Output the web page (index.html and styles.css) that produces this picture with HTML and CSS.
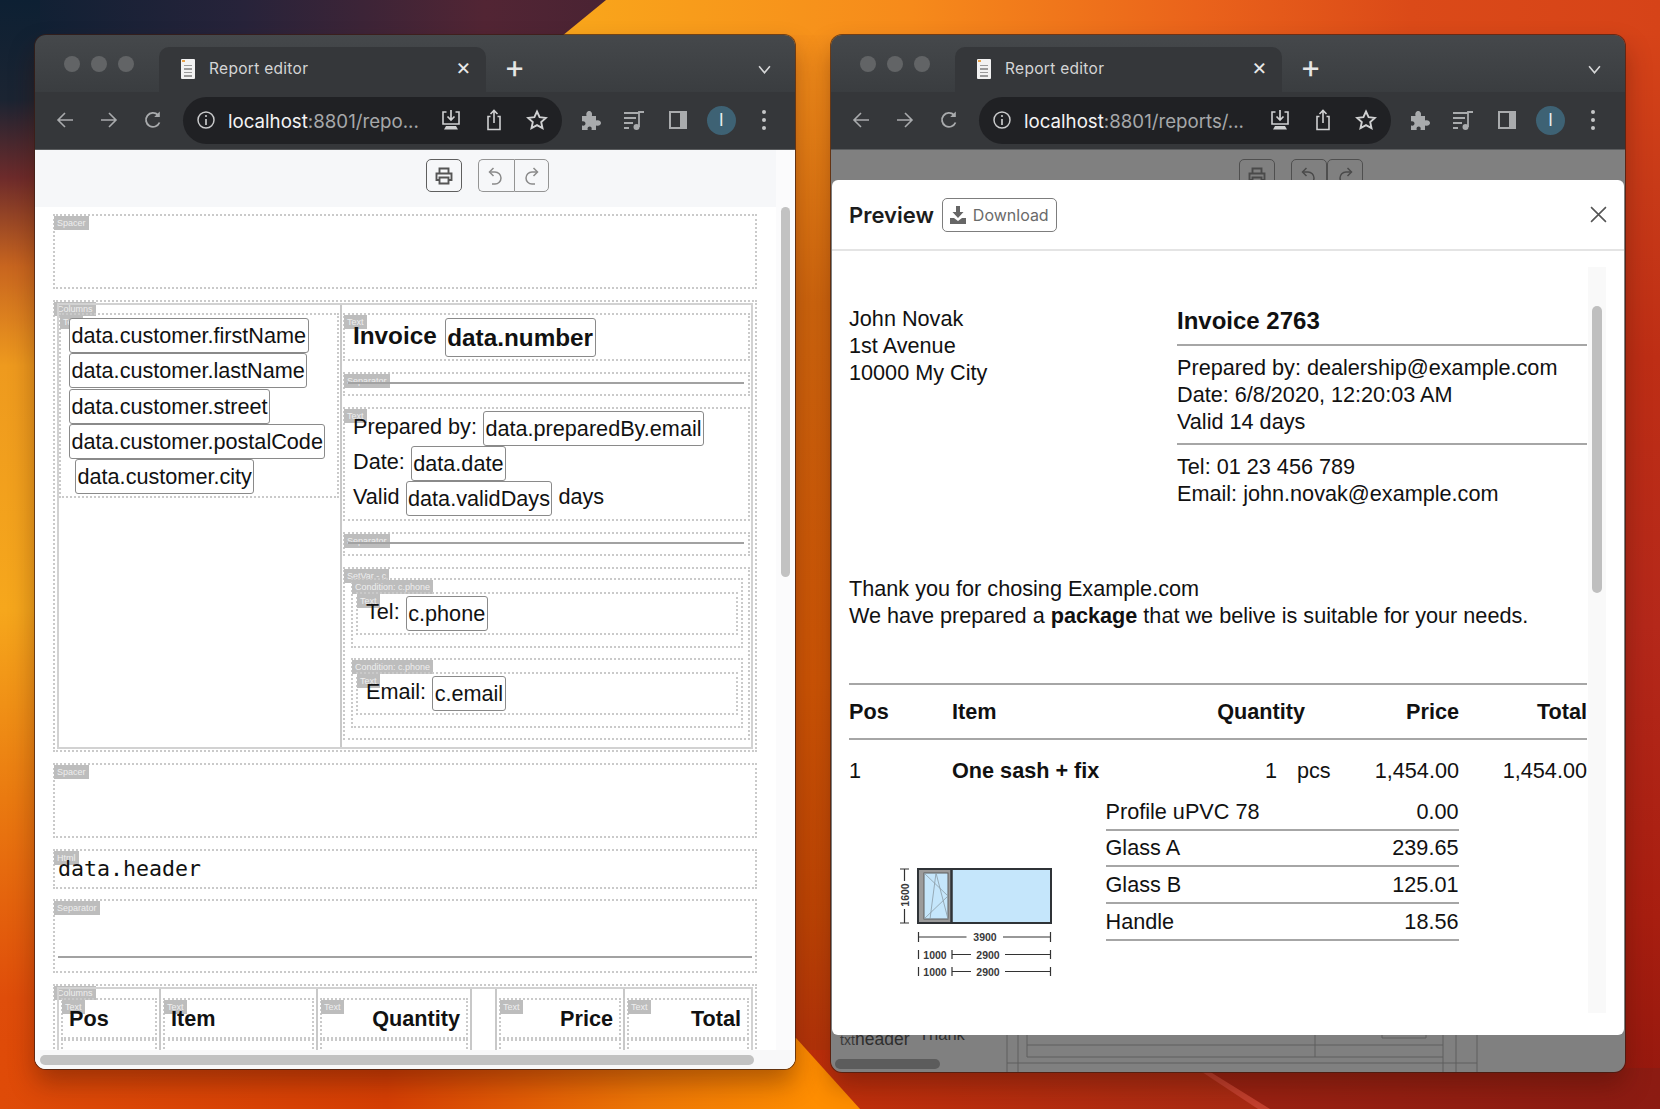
FILE: index.html
```html
<!DOCTYPE html>
<html lang="en">
<head>
  <meta charset="UTF-8">
  <meta name="viewport" content="width=device-width, initial-scale=1.0">
  <title>Report editor</title>
  <link rel="stylesheet" href="styles.css">
</head>
<body>
  <!-- Desktop wallpaper -->
  <svg class="wallpaper" viewBox="0 0 1660 1109" aria-hidden="true">
    <defs>
      <linearGradient id="wpBase" x1="0" x2="1" y1="0" y2="0">
        <stop offset="0.35" stop-color="#f9a51b"/>
        <stop offset="0.55" stop-color="#f68a1b"/>
        <stop offset="0.72" stop-color="#ea631b"/>
        <stop offset="0.85" stop-color="#db4a18"/>
        <stop offset="1" stop-color="#d64318"/>
      </linearGradient>
      <linearGradient id="wpMiddle" x1="0" x2="0" y1="0" y2="1">
        <stop offset="0" stop-color="#f5901b"/>
        <stop offset="0.25" stop-color="#d0660e"/>
        <stop offset="0.6" stop-color="#cf5606"/>
        <stop offset="0.82" stop-color="#bf4505"/>
        <stop offset="0.94" stop-color="#b5340a"/>
      </linearGradient>
      <linearGradient id="wpRight" x1="0" x2="0" y1="0" y2="1">
        <stop offset="0" stop-color="#d64318"/>
        <stop offset="0.14" stop-color="#c83a18"/>
        <stop offset="0.3" stop-color="#be2e15"/>
        <stop offset="0.55" stop-color="#b5281a"/>
        <stop offset="0.82" stop-color="#a81e10"/>
        <stop offset="1" stop-color="#94180e"/>
      </linearGradient>
      <linearGradient id="wpLeft" x1="0" x2="0" y1="0" y2="1">
        <stop offset="0" stop-color="#0d2033"/>
        <stop offset="0.09" stop-color="#1b2432"/>
        <stop offset="0.16" stop-color="#6d2b2b"/>
        <stop offset="0.24" stop-color="#c8651f"/>
        <stop offset="0.33" stop-color="#ee9a1e"/>
        <stop offset="0.55" stop-color="#f6a71c"/>
        <stop offset="0.72" stop-color="#ea7a10"/>
        <stop offset="0.9" stop-color="#df4d0a"/>
        <stop offset="1" stop-color="#dd4808"/>
      </linearGradient>
      <linearGradient id="wpTop" x1="0" x2="1" y1="0" y2="0">
        <stop offset="0" stop-color="#0d2033"/>
        <stop offset="0.4" stop-color="#27233a"/>
        <stop offset="0.8" stop-color="#522534"/>
        <stop offset="1" stop-color="#4a2333"/>
      </linearGradient>
      <linearGradient id="wpBottom" x1="0" x2="1" y1="0" y2="0">
        <stop offset="0" stop-color="#df4b08"/>
        <stop offset="0.45" stop-color="#d63f04"/>
        <stop offset="0.75" stop-color="#ee7706"/>
        <stop offset="0.95" stop-color="#ff8e00"/>
      </linearGradient>
      <linearGradient id="wpFloor" x1="0" x2="1" y1="0" y2="0">
        <stop offset="0" stop-color="#c4300a"/>
        <stop offset="1" stop-color="#a82a14"/>
      </linearGradient>
      <linearGradient id="wpCorner" x1="0" x2="1" y1="0" y2="0">
        <stop offset="0" stop-color="#9c2212"/>
        <stop offset="1" stop-color="#8c1b12"/>
      </linearGradient>
    </defs>
    <rect width="1660" height="1109" fill="url(#wpBase)"/>
    <rect x="780" y="35" width="70" height="1074" fill="url(#wpMiddle)"/>
    <rect x="1600" y="35" width="60" height="1074" fill="url(#wpRight)"/>
    <rect x="780" y="1050" width="500" height="59" fill="url(#wpFloor)"/>
    <polygon points="0,0 606,0 540,54 0,54" fill="url(#wpTop)"/>
    <rect width="40" height="1109" fill="url(#wpLeft)"/>
    <polygon points="0,1040 796,1038 860,1109 0,1109" fill="url(#wpBottom)"/>
    <polygon points="1196,1068 1660,1068 1660,1109 1264,1109" fill="url(#wpCorner)"/>
    <polygon points="1196,1068 1204,1068 1270,1109 1258,1109" fill="#c4402e"/>
  </svg>

  <!-- Shared chrome icons -->
  <svg class="sprite" aria-hidden="true">
    <symbol id="iBack" viewBox="0 0 20 20"><path d="M18 10H3M10 3l-7 7 7 7" fill="none" stroke="currentColor" stroke-width="1.6"/></symbol>
    <symbol id="iForward" viewBox="0 0 20 20"><path d="M2 10h15M10 3l7 7-7 7" fill="none" stroke="currentColor" stroke-width="1.6"/></symbol>
    <symbol id="iReload" viewBox="0 0 20 20"><path d="M16.5 12.5A7 7 0 1 1 15 5" fill="none" stroke="currentColor" stroke-width="1.8"/><path d="M16.8 1.5v5.6h-5.6z" fill="currentColor"/></symbol>
    <symbol id="iInfo" viewBox="0 0 20 20"><circle cx="10" cy="10" r="8" fill="none" stroke="currentColor" stroke-width="1.5"/><path d="M10 9v6" stroke="currentColor" stroke-width="1.7"/><circle cx="10" cy="6" r="1.1" fill="currentColor"/></symbol>
    <symbol id="iInstall" viewBox="0 0 22 22"><path d="M6.5 3H3v12h16V3h-3.500" fill="none" stroke="currentColor" stroke-width="1.6"/><path d="M11 1v10M7.500 7.500 11 11l3.500-3.500" fill="none" stroke="currentColor" stroke-width="1.7"/><path d="M6 17h10l2 3.500H4z" fill="currentColor"/></symbol>
    <symbol id="iShare" viewBox="0 0 22 22"><path d="M7.500 7.500H5v13h12v-13h-2.500" fill="none" stroke="currentColor" stroke-width="1.6"/><path d="M11 14V2M7.500 5 11 1.500 14.500 5" fill="none" stroke="currentColor" stroke-width="1.6"/></symbol>
    <symbol id="iStar" viewBox="0 0 22 22"><path d="m11 2.500 2.600 5.700 6.200.7-4.600 4.200 1.300 6.100L11 16.100l-5.500 3.100 1.300-6.100-4.600-4.200 6.200-.7z" fill="none" stroke="currentColor" stroke-width="1.9"/></symbol>
    <symbol id="iPuzzle" viewBox="0 0 22 22"><path d="M3 7h4.500c-.8-3.500 1-5 2.700-5s3.500 1.500 2.700 5H17v4.500c3.500-.8 5 1 5 2.500s-1.500 3.300-5 2.500V21h-4.500c.8-2.500-.5-3.500-1.800-3.500S8 18.500 8.700 21H3v-4.500c2.500.6 3.500-.8 3.500-2S5.500 11.700 3 12.300z" fill="currentColor"/></symbol>
    <symbol id="iQueue" viewBox="0 0 22 22"><path d="M1 4h15M1 9h12M1 14h9M1 19h5" fill="none" stroke="currentColor" stroke-width="1.800"/><path d="M16 18V3h5" fill="none" stroke="currentColor" stroke-width="1.800"/><circle cx="13.500" cy="18" r="3" fill="currentColor"/></symbol>
    <symbol id="iPanel" viewBox="0 0 22 22"><path d="M2 2h18v18H2z" fill="currentColor"/><path d="M4 4h9v14H4z" fill="#35373a"/></symbol>
    <symbol id="iMenu" viewBox="0 0 6 22"><circle cx="3" cy="3" r="2" fill="currentColor"/><circle cx="3" cy="11" r="2" fill="currentColor"/><circle cx="3" cy="19" r="2" fill="currentColor"/></symbol>
    <symbol id="iPage" viewBox="0 0 14 20"><path d="M0 1q0-1 1-1h12q1 0 1 1v18q0 1-1 1H1q-1 0-1-1z" fill="#f2f2f2"/><path d="M1 1h3v2H1z" fill="#e8a24a"/><path d="M3 6h8v1H3zM3 9h8v2H3zM3 13h8v1H3zM3 16h8v2H3z" fill="#9a9a9a"/></symbol>
    <symbol id="iPrint" viewBox="0 0 20 20"><path d="M5.500 7V2.500h9V7M5.500 14H2.500V7.500h15V14h-3" fill="none" stroke="currentColor" stroke-width="1.900"/><path d="M5.500 11.500h9v6h-9z" fill="none" stroke="currentColor" stroke-width="1.900"/></symbol>
    <symbol id="iUndo" viewBox="0 0 20 20"><path d="M6 18h3a6 6 0 0 0 0-12H4" fill="none" stroke="currentColor" stroke-width="1.500"/><path d="M7.500 2 3.500 6l4 4" fill="none" stroke="currentColor" stroke-width="1.500"/></symbol>
    <symbol id="iRedo" viewBox="0 0 20 20"><path d="M14 18h-3a6 6 0 0 1 0-12h5" fill="none" stroke="currentColor" stroke-width="1.500"/><path d="m12.500 2 4 4-4 4" fill="none" stroke="currentColor" stroke-width="1.500"/></symbol>
  </svg>

  <div class="desktop">

    <!-- Editor window -->
    <div class="window window-editor">
      <div class="tabstrip">
        <div class="lights"><span></span><span></span><span></span></div>
        <div class="tab">
          <svg class="favicon"><use href="#iPage"/></svg>
          <span class="tab-title">Report editor</span>
          <span class="tab-close">×</span>
        </div>
        <span class="tab-new">+</span>
        <svg class="tab-list" viewBox="0 0 12 8"><path d="M1 1l5 6 5-6" fill="none" stroke="currentColor" stroke-width="1.500"/></svg>
      </div>
      <div class="toolbar">
        <div class="nav">
          <svg class="ico"><use href="#iBack"/></svg>
          <svg class="ico"><use href="#iForward"/></svg>
          <svg class="ico"><use href="#iReload"/></svg>
        </div>
        <div class="omnibox">
          <svg class="ico-info"><use href="#iInfo"/></svg>
          <span class="url"><b>localhost</b>:8801/repo...</span>
          <svg class="ico-box"><use href="#iInstall"/></svg>
          <svg class="ico-box"><use href="#iShare"/></svg>
          <svg class="ico-box"><use href="#iStar"/></svg>
        </div>
        <div class="actions">
          <svg class="ico-act"><use href="#iPuzzle"/></svg>
          <svg class="ico-act"><use href="#iQueue"/></svg>
          <svg class="ico-act"><use href="#iPanel"/></svg>
          <span class="avatar">I</span>
          <svg class="ico-menu"><use href="#iMenu"/></svg>
        </div>
      </div>

      <div class="editor">
        <div class="editor-main">
          <div class="editor-bar">
            <button class="btn btn-print"><svg><use href="#iPrint"/></svg></button>
            <div class="btn-group">
              <button class="btn"><svg><use href="#iUndo"/></svg></button>
              <button class="btn"><svg><use href="#iRedo"/></svg></button>
            </div>
          </div>
          <div class="report">
            <div class="box spacer"><span class="tag">Spacer</span></div>

            <div class="box columns">
              <span class="tag">Columns</span>
              <div class="frame">
                <div class="col col-left">
                  <div class="box text-customer">
                    <span class="tag">Text</span>
                    <span class="field">data.customer.firstName</span>
                    <span class="field">data.customer.lastName</span>
                    <span class="field">data.customer.street</span>
                    <span class="field">data.customer.postalCode</span>
                    <span class="field field-city">data.customer.city</span>
                  </div>
                </div>
                <div class="col col-right">
                  <div class="box text-title">
                    <span class="tag">Text</span>
                    <strong>Invoice</strong>
                    <span class="field field-bold">data.number</span>
                  </div>
                  <div class="box sep-small"><span class="tag">Separator</span><hr></div>
                  <div class="box text-meta">
                    <span class="tag">Text</span>
                    <div class="line">Prepared by: <span class="field">data.preparedBy.email</span></div>
                    <div class="line">Date: <span class="field">data.date</span></div>
                    <div class="line">Valid <span class="field">data.validDays</span> days</div>
                  </div>
                  <div class="box sep-small"><span class="tag">Separator</span><hr></div>
                  <div class="box setvar">
                    <span class="tag">SetVar - c</span>
                    <div class="box condition">
                      <span class="tag">Condition: c.phone</span>
                      <div class="box text-contact">
                        <span class="tag">Text</span>
                        <div class="line line-wide">Tel: <span class="field">c.phone</span></div>
                      </div>
                    </div>
                    <div class="box condition">
                      <span class="tag">Condition: c.phone</span>
                      <div class="box text-contact">
                        <span class="tag">Text</span>
                        <div class="line line-wide">Email: <span class="field">c.email</span></div>
                      </div>
                    </div>
                  </div>
                </div>
              </div>
            </div>

            <div class="box spacer"><span class="tag">Spacer</span></div>
            <div class="box html-block"><span class="tag">Html</span>data.header</div>
            <div class="box sep-large"><span class="tag">Separator</span><hr></div>

            <div class="box columns columns-head">
              <span class="tag">Columns</span>
              <div class="frame frame-head">
                <div class="head-col"><div class="box head-cell"><span class="tag">Text</span>Pos</div><div class="box head-next"></div></div>
                <div class="head-col"><div class="box head-cell"><span class="tag">Text</span>Item</div><div class="box head-next"></div></div>
                <div class="head-col"><div class="box head-cell head-right"><span class="tag">Text</span>Quantity</div><div class="box head-next"></div></div>
                <div class="head-col"></div>
                <div class="head-col"><div class="box head-cell head-right"><span class="tag">Text</span>Price</div><div class="box head-next"></div></div>
                <div class="head-col"><div class="box head-cell head-right"><span class="tag">Text</span>Total</div><div class="box head-next"></div></div>
              </div>
            </div>
          </div>
        </div>
        <div class="vscroll"><div class="vscroll-thumb"></div></div>
        <div class="hscroll"><div class="hscroll-thumb"></div></div>
      </div>
    </div>

    <!-- Preview window -->
    <div class="window window-preview">
      <div class="tabstrip">
        <div class="lights"><span></span><span></span><span></span></div>
        <div class="tab">
          <svg class="favicon"><use href="#iPage"/></svg>
          <span class="tab-title">Report editor</span>
          <span class="tab-close">×</span>
        </div>
        <span class="tab-new">+</span>
        <svg class="tab-list" viewBox="0 0 12 8"><path d="M1 1l5 6 5-6" fill="none" stroke="currentColor" stroke-width="1.500"/></svg>
      </div>
      <div class="toolbar">
        <div class="nav">
          <svg class="ico"><use href="#iBack"/></svg>
          <svg class="ico"><use href="#iForward"/></svg>
          <svg class="ico"><use href="#iReload"/></svg>
        </div>
        <div class="omnibox">
          <svg class="ico-info"><use href="#iInfo"/></svg>
          <span class="url"><b>localhost</b>:8801/reports/...</span>
          <svg class="ico-box"><use href="#iInstall"/></svg>
          <svg class="ico-box"><use href="#iShare"/></svg>
          <svg class="ico-box"><use href="#iStar"/></svg>
        </div>
        <div class="actions">
          <svg class="ico-act"><use href="#iPuzzle"/></svg>
          <svg class="ico-act"><use href="#iQueue"/></svg>
          <svg class="ico-act"><use href="#iPanel"/></svg>
          <span class="avatar">I</span>
          <svg class="ico-menu"><use href="#iMenu"/></svg>
        </div>
      </div>

      <div class="backdrop">
        <div class="backdrop-bar">
          <span class="dim-btn"><svg><use href="#iPrint"/></svg></span>
          <span class="dim-group">
            <span class="dim-btn"><svg><use href="#iUndo"/></svg></span>
            <span class="dim-btn"><svg><use href="#iRedo"/></svg></span>
          </span>
        </div>
        <!-- dimmed editor peeking out under the dialog -->
        <svg class="backdrop-under" viewBox="0 0 794 37">
          <text x="9" y="10" class="dim-small">txt</text>
          <text x="24" y="10" class="dim-text">header</text>
          <text x="88" y="5" class="dim-thank">Thank</text>
          <path d="M176 0v37M187 0v37M612 0v37M625 0v37M646 0v37" class="dim-line"/>
          <path d="M196 0v22M196 10H484V0M484 10H612M196 22H612M176 28H646M484 10v12M551 0v3h44V0" class="dim-line"/>
          <rect x="4" y="24" width="105" height="10" rx="5" fill="#5c5c5c"/>
        </svg>

        <div class="modal">
          <div class="modal-head">
            <span class="modal-title">Preview</span>
            <button class="btn-download">
              <svg viewBox="0 0 16 18"><path d="M6 0h4v6h3.500L8 12 2.500 6H6z" fill="currentColor"/><path d="M0 12h4l4 3 4-3h4v6H0z" fill="currentColor"/></svg>
              Download
            </button>
            <svg class="modal-close" viewBox="0 0 16 16"><path d="M1 1l14 14M15 1 1 15" fill="none" stroke="currentColor" stroke-width="1.500"/></svg>
          </div>
          <div class="modal-body">
            <div class="doc">
              <div class="doc-top">
                <div>
                  <div>John Novak</div>
                  <div>1st Avenue</div>
                  <div>10000 My City</div>
                </div>
                <div>
                  <div class="doc-number">Invoice 2763</div>
                  <hr class="rule rule-a">
                  <div>Prepared by: dealership@example.com</div>
                  <div>Date: 6/8/2020, 12:20:03 AM</div>
                  <div>Valid 14 days</div>
                  <hr class="rule rule-b">
                  <div>Tel: 01 23 456 789</div>
                  <div>Email: john.novak@example.com</div>
                </div>
              </div>

              <div class="doc-intro">
                <div>Thank you for chosing Example.com</div>
                <div>We have prepared a <b>package</b> that we belive is suitable for your needs.</div>
              </div>

              <div class="doc-head">
                <span>Pos</span>
                <span>Item</span>
                <span class="num">Quantity</span>
                <span class="num">Price</span>
                <span class="num">Total</span>
              </div>
              <div class="doc-row">
                <span>1</span>
                <b>One sash + fix</b>
                <span class="num">1</span>
                <span class="unit">pcs</span>
                <span class="num">1,454.00</span>
                <span class="num">1,454.00</span>
              </div>

              <div class="doc-detail">
                <svg class="drawing" viewBox="895 860 161 120">
                  <rect x="918" y="869" width="133" height="54" fill="#c5e6fb"/>
                  <rect x="919" y="869" width="33" height="54" fill="#9b9b9b"/>
                  <rect x="924" y="873" width="24" height="46" fill="#c5e6fb" stroke="#5c5c5c"/>
                  <path d="M924 873l24 23-24 23M936 873l-6 46M936 873l12 46" fill="none" stroke="#8a9aa5" stroke-width=".8"/>
                  <rect x="918" y="869" width="133" height="54" fill="none" stroke="#2f3337" stroke-width="2"/>
                  <path d="M951.500 869v54" stroke="#2f3337" stroke-width="2.500"/>
                  <path d="M900 869h9M904.500 869v12M904.500 909v14M900 923h9" class="dim-stroke"/>
                  <text class="draw-label draw-bold" transform="translate(909 895) rotate(-90)" text-anchor="middle">1600</text>
                  <path d="M918.500 932v10M918.500 937h48M1003 937h47.500M1050.500 932v10" class="dim-stroke"/>
                  <text class="draw-label" x="985" y="941" text-anchor="middle">3900</text>
                  <path d="M918.500 950v9M952 950v9M952 954.500h19M1005 954.500h45.500M1050.500 950v9" class="dim-stroke"/>
                  <text class="draw-label" x="935" y="958.500" text-anchor="middle">1000</text>
                  <text class="draw-label" x="988" y="958.500" text-anchor="middle">2900</text>
                  <path d="M918.500 967v9M952 967v9M952 971.500h19M1005 971.500h45.500M1050.500 967v9" class="dim-stroke"/>
                  <text class="draw-label" x="935" y="976" text-anchor="middle">1000</text>
                  <text class="draw-label" x="988" y="976" text-anchor="middle">2900</text>
                </svg>
                <div class="parts">
                  <div class="part"><span>Profile uPVC 78</span><span>0.00</span></div>
                  <div class="part"><span>Glass A</span><span>239.65</span></div>
                  <div class="part"><span>Glass B</span><span>125.01</span></div>
                  <div class="part"><span>Handle</span><span>18.56</span></div>
                </div>
              </div>
            </div>
            <div class="doc-scroll"><div class="doc-thumb"></div></div>
          </div>
        </div>
      </div>
    </div>

  </div>
</body>
</html>
```

FILE: styles.css
```css
* {
  box-sizing: border-box;
}
html, body {
  margin: 0;
  height: 100%;
}
body {
  position: relative;
  overflow: hidden;
  font-family: "Liberation Sans", Arial, sans-serif;
  font-size: 21.65px;
  color: #111;
}
.wallpaper {
  position: absolute;
  top: 0;
  left: 0;
  width: 1660px;
  height: 1109px;
}
.sprite {
  position: absolute;
  width: 0;
  height: 0;
}
.desktop {
  position: relative;
  display: flex;
  align-items: flex-start;
  gap: 36px;
  padding: 35px 35px 0;
}

/* Browser window */
.window {
  display: flex;
  flex-direction: column;
  overflow: hidden;
  border-radius: 11px;
  box-shadow: 0 0 0 1px rgba(60, 30, 20, 0.7), 0 14px 26px rgba(60, 15, 5, 0.38);
}
.window-editor {
  width: 760px;
  height: 1034px;
}
.window-preview {
  width: 794px;
  height: 1037px;
}
.tabstrip {
  display: flex;
  align-items: flex-end;
  height: 57px;
  background: linear-gradient(#45484b, #3a3d40);
  color: #d5d6d7;
}
.lights {
  display: flex;
  gap: 11px;
  width: 124px;
  padding: 0 0 20px 29px;
  align-self: flex-end;
}
.lights span {
  width: 16px;
  height: 16px;
  border-radius: 50%;
  background: #626466;
}
.tab {
  display: flex;
  align-items: center;
  width: 327px;
  height: 45px;
  padding: 0 15px 2px 22px;
  border-radius: 10px 10px 0 0;
  background: #35373a;
}
.favicon {
  width: 14px;
  height: 20px;
  flex: none;
}
.tab-title {
  flex: 1;
  margin-left: 14px;
  font: 15.500px Inter, sans-serif;
  letter-spacing: 0.3px;
  color: #d4d5d6;
}
.tab-close {
  font: 23px/20px Inter, sans-serif;
  height: 24px;
  color: #e8e8e8;
}
.tab-new {
  margin-left: 18px;
  padding-bottom: 6px;
  font: 32px/38px Inter, sans-serif;
  color: #e6e6e6;
}
.tab-list {
  width: 13px;
  height: 9px;
  margin: 0 24px 18px auto;
  color: #d5d6d7;
}
.toolbar {
  display: flex;
  align-items: center;
  height: 58px;
  padding-bottom: 1px;
  background: #35373a;
  border-bottom: 1px solid #5a5c5e;
  color: #a9abad;
}
.nav {
  display: flex;
  gap: 24px;
  width: 148px;
  padding-left: 20px;
  flex: none;
}
.ico {
  width: 20px;
  height: 20px;
}
.omnibox {
  display: flex;
  align-items: center;
  flex: 1;
  height: 47px;
  padding: 0 14px 0 13px;
  border-radius: 24px;
  background: #202124;
}
.ico-info {
  width: 20px;
  height: 20px;
  flex: none;
  color: #c9cacb;
}
.url {
  flex: 1;
  margin-left: 12px;
  padding-top: 2px;
  font: 18.700px Inter, sans-serif;
  color: #a6a8aa;
  white-space: nowrap;
}
.url b {
  font-weight: 400;
  color: #f4f4f4;
}
.ico-box {
  width: 22px;
  height: 22px;
  flex: none;
  margin-left: 21px;
  color: #d0d1d2;
}
.actions {
  display: flex;
  align-items: center;
  gap: 22px;
  width: 234px;
  padding-left: 17px;
  flex: none;
  color: #a9abad;
}
.ico-act {
  width: 22px;
  height: 22px;
  flex: none;
}
.avatar {
  display: flex;
  align-items: center;
  justify-content: center;
  width: 29px;
  height: 29px;
  flex: none;
  margin: 0 -4px;
  border-radius: 50%;
  background: #3e6274;
  font: 17px Inter, sans-serif;
  color: #e8eef0;
}
.ico-menu {
  width: 6px;
  height: 22px;
  flex: none;
  margin-left: 7px;
  color: #c4c6c7;
}

/* Editor pane */
.editor {
  display: grid;
  grid-template-columns: 740.500px 19.500px;
  grid-template-rows: 900px 19px;
  flex: 1;
  background: #fff;
}
.editor-main {
  overflow: hidden;
}
.editor-bar {
  display: flex;
  align-items: flex-start;
  gap: 16px;
  height: 57px;
  padding: 9px 0 0 391px;
  background: #f6f7f9;
}
.btn {
  display: flex;
  align-items: center;
  justify-content: center;
  width: 35.500px;
  height: 33px;
  padding: 0;
  background: transparent;
  border: 1px solid #949494;
  border-radius: 5px;
  color: #8a8a8a;
}
.btn svg {
  width: 20px;
  height: 20px;
}
.btn-print {
  width: 36px;
  border: 1.500px solid #5f5f5f;
  color: #555;
}
.btn-group {
  display: flex;
}
.btn-group .btn:first-child {
  border-radius: 5px 0 0 5px;
  border-right: 0;
}
.btn-group .btn:last-child {
  border-radius: 0 5px 5px 0;
}
.vscroll {
  padding: 57px 5.500px 0;
  background: #fbfbfc;
}
.vscroll-thumb {
  height: 370px;
  border-radius: 5px;
  background: #c2c2c2;
}
.hscroll {
  grid-column: 1 / 3;
  padding: 5px 41px 4px 5px;
  background: #f8f8f9;
}
.hscroll-thumb {
  height: 10px;
  border-radius: 5px;
  background: #c2c2c2;
}

/* Report designer blocks */
.report {
  width: 704px;
  margin: 7px 0 0 18px;
}
.box {
  position: relative;
  z-index: 0;
  border: 2px dotted #cacaca;
}
.tag {
  position: absolute;
  top: 0;
  left: -1px;
  z-index: -1;
  padding: 0 3px;
  font: 9px/14px "Liberation Sans", sans-serif;
  color: #eee;
  background: #bdbdbd;
  white-space: nowrap;
}
.spacer {
  height: 75px;
  margin-bottom: 11px;
}
.columns {
  height: 452px;
  margin-bottom: 11px;
  padding: 1px 2px;
}
.frame {
  display: grid;
  grid-template-columns: 283px 1fr;
  height: 446px;
  border: 2px solid #d2d2d2;
}
.col {
  padding-top: 8px;
}
.col-left {
  border-right: 2px solid #c8c8c8;
}
.field {
  display: block;
  width: fit-content;
  height: 35px;
  padding: 0 1.500px;
  border: 1px solid #8a8a8a;
  border-bottom-width: 1.500px;
  border-radius: 3px;
  background: #fff;
  line-height: 33px;
  white-space: nowrap;
}
.text-customer {
  height: 185px;
  margin-right: 1px;
  padding: 3px 0 0 8px;
}
.text-customer .field {
  margin-bottom: 0.25px;
}
.text-customer .field-city {
  margin-left: 6px;
}
.col-right .box {
  margin-left: 1px;
  margin-right: 1px;
}
.text-title {
  display: flex;
  align-items: center;
  gap: 8px;
  height: 48px;
  padding-left: 8px;
}
.text-title strong {
  font-size: 24.300px;
  margin-top: -3px;
}
.field-bold {
  height: 39px;
  font-size: 24.300px;
  font-weight: bold;
  line-height: 37px;
}
.sep-small {
  height: 24px;
  margin-top: 11px;
  padding: 8px 4px 0 3px;
}
hr {
  height: 2px;
  margin: 0;
  border: 0;
  background: #a2a2a2;
}
.text-meta {
  height: 114px;
  margin-top: 11px;
  padding: 2px 0 0 8px;
}
.line {
  display: flex;
  align-items: flex-start;
  gap: 6px;
  height: 35px;
  line-height: 32px;
}
.line-wide {
  height: 34px;
}
.col-right .setvar {
  height: 173px;
  margin-top: 11px;
  padding-top: 9px;
}
.col-right .condition {
  height: 70px;
  margin: 0 5px 10px 6px;
  padding-top: 12px;
}
.col-right .text-contact {
  height: 43px;
  margin: 0 3px;
  padding: 2px 0 0 8px;
}
.html-block {
  height: 40px;
  margin-bottom: 10px;
  padding-left: 3px;
  font: 21.600px/36px "DejaVu Sans Mono", monospace;
}
.sep-large {
  height: 74px;
  margin-bottom: 11px;
  padding: 55px 3px 0;
}
.columns-head {
  height: 80px;
  margin-bottom: 0;
}
.frame-head {
  grid-template-columns: 102px 157px 154px 25px 128px 1fr;
  height: 100px;
  padding: 0;
}
.head-col {
  padding: 9px 2px 0;
  border-right: 2px solid #c8c8c8;
}
.head-col:last-child {
  border-right: 0;
}
.head-cell {
  height: 41px;
  padding: 0 6px;
  font-weight: bold;
  line-height: 38px;
}
.head-right {
  text-align: right;
}
.head-next {
  height: 30px;
}

/* Preview window, dimmed editor behind the dialog */
.backdrop {
  position: relative;
  flex: 1;
  background: #808080;
}
.backdrop-bar {
  display: flex;
  gap: 16px;
  height: 30px;
  padding: 9px 0 0 408px;
  overflow: hidden;
}
.dim-btn {
  display: flex;
  align-items: center;
  justify-content: center;
  width: 36px;
  height: 33px;
  border: 1px solid #4f4f4f;
  border-radius: 5px;
  color: #4a4a4a;
}
.dim-btn svg {
  width: 20px;
  height: 20px;
}
.dim-group {
  display: flex;
}
.backdrop-under {
  position: absolute;
  left: 0;
  bottom: 0;
  width: 794px;
  height: 37px;
}
.dim-text {
  font: 17.500px "Liberation Sans", sans-serif;
  fill: #2e2e2e;
}
.dim-thank {
  font: 16.500px "Liberation Sans", sans-serif;
  fill: #2e2e2e;
}
.dim-small {
  font: 14px "Liberation Sans", sans-serif;
  fill: #3a3a3a;
}
.dim-line {
  fill: none;
  stroke: #5e5e5e;
  stroke-width: 1;
}

/* Dialog */
.modal {
  position: absolute;
  top: 30px;
  left: 1px;
  right: 1px;
  bottom: 37px;
  display: flex;
  flex-direction: column;
  border-radius: 6px;
  background: #fff;
  overflow: hidden;
}
.modal-head {
  display: flex;
  align-items: center;
  gap: 8px;
  height: 71px;
  padding: 0 17px;
  border-bottom: 2px solid #e4e4e4;
}
.modal-title {
  font: 600 22px Inter, sans-serif;
  color: #1c1c1c;
}
.btn-download {
  display: flex;
  align-items: center;
  gap: 7px;
  width: 115px;
  height: 34px;
  padding: 0 0 0 7px;
  background: #fff;
  border: 1px solid #7d7d7d;
  border-bottom-width: 1.500px;
  border-radius: 5px;
  font: 16px Inter, sans-serif;
  color: #6a6a6a;
}
.btn-download svg {
  width: 16px;
  height: 18px;
  color: #666;
}
.modal-close {
  width: 17px;
  height: 17px;
  margin-left: auto;
  color: #555;
}
.modal-body {
  position: relative;
  flex: 1;
}
.doc {
  width: 738px;
  margin-left: 17px;
  padding-top: 54px;
  line-height: 27px;
}
.doc-top {
  display: grid;
  grid-template-columns: 328px 1fr;
}
.doc-number {
  margin-top: 1px;
  font-size: 24px;
  font-weight: bold;
  line-height: 30px;
}
.rule {
  height: 2px;
  border: 0;
  background: #a6a6a6;
}
.rule-a {
  margin: 8px 0 8px;
}
.rule-b {
  margin: 8px 0 8px;
}
.doc-intro {
  margin-top: 68px;
}
.doc-head {
  display: grid;
  grid-template-columns: 103px 200px 1fr 154px 128px;
  align-items: center;
  height: 57px;
  margin-top: 54px;
  border-top: 2px solid #a6a6a6;
  border-bottom: 2px solid #a6a6a6;
  font-weight: bold;
}
.num {
  text-align: right;
}
.doc-row {
  display: grid;
  grid-template-columns: 103px 1fr 97px 53px 129px 128px;
  margin-top: 17px;
}
.unit {
  padding-left: 20px;
}
.doc-detail {
  display: flex;
  align-items: flex-start;
  margin-top: 10px;
}
.drawing {
  width: 161px;
  height: 120px;
  flex: none;
  margin: 66px 0 0 46px;
}
.dim-stroke {
  fill: none;
  stroke: #333;
  stroke-width: 1.200;
}
.draw-label {
  font: 10.500px "Liberation Sans", sans-serif;
  font-weight: bold;
  fill: #3a3a3a;
}
.parts {
  width: 353px;
  margin-left: 49.500px;
}
.part {
  display: flex;
  justify-content: space-between;
  align-items: center;
  height: 36.670px;
  border-bottom: 2px solid #a6a6a6;
}
.doc-scroll {
  position: absolute;
  top: 16px;
  right: 18px;
  width: 18px;
  height: 746px;
  padding: 39px 4px 0;
  background: #f9f9f9;
}
.doc-thumb {
  height: 287px;
  border-radius: 5px;
  background: #bfbfbf;
}
```
